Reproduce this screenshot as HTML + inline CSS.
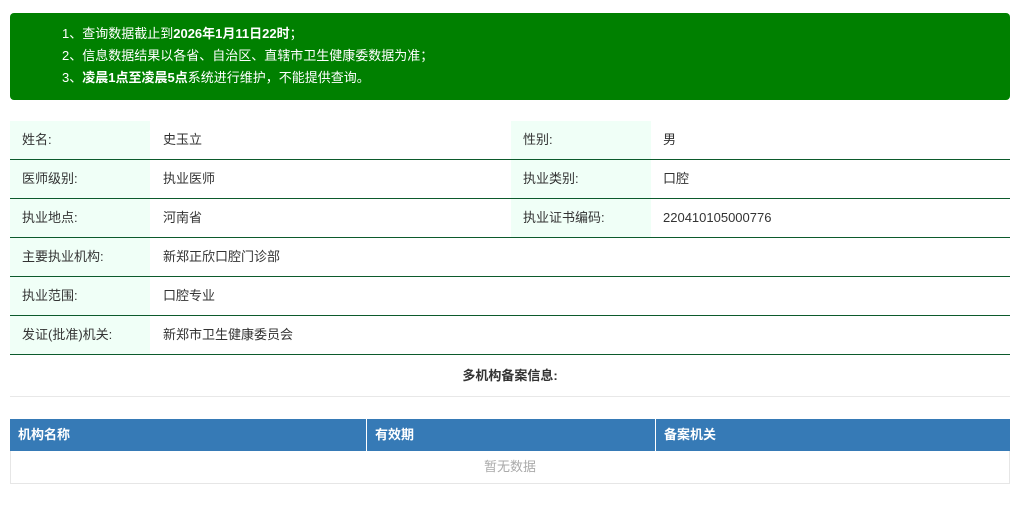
<!DOCTYPE html>
<html><head><meta charset="utf-8"><style>
body{margin:0;background:#fff;font-family:"Liberation Sans","Noto Sans CJK SC",sans-serif;font-size:13px;color:#333;width:1018px;height:521px;overflow:hidden;position:relative}
.notice{position:absolute;left:10px;top:13px;width:1000px;height:87px;background:#008000;border-radius:4px;color:#fff;font-size:13px;line-height:22px;box-sizing:border-box;padding:10px 0 0 52px}
.row{position:absolute;left:10px;width:1000px;height:38px;border-bottom:1px solid #0c5a2c}
.c{position:absolute;top:0;height:38px;line-height:38px}
.l{background:#f0fff7;width:140px;padding-left:12px;box-sizing:border-box}
.title{position:absolute;left:10px;width:1000px;top:366px;text-align:center;font-weight:bold;font-size:13px;line-height:20px}
.hr{position:absolute;left:10px;width:1000px;top:396px;border-top:1px solid #e8e8e8}
.th{position:absolute;top:419px;height:32px;background:#367ab6;color:#fff;font-weight:bold;line-height:32px;padding-left:8px;box-sizing:border-box}
.empty{position:absolute;left:10px;top:451px;width:1000px;height:33px;border:1px solid #e6e6e6;border-top:none;box-sizing:border-box;text-align:center;line-height:32px;color:#aaa}
</style></head><body>
<div class="notice">1、查询数据截止到<b>2026年1月11日22时</b>；<br>2、信息数据结果以各省、自治区、直辖市卫生健康委数据为准；<br>3、<b>凌晨1点至凌晨5点</b>系统进行维护，不能提供查询。</div>

<div class="row" style="top:121px"><div class="c l" style="left:0">姓名:</div><div class="c" style="left:153px">史玉立</div><div class="c l" style="left:501px">性别:</div><div class="c" style="left:653px">男</div></div>
<div class="row" style="top:160px"><div class="c l" style="left:0">医师级别:</div><div class="c" style="left:153px">执业医师</div><div class="c l" style="left:501px">执业类别:</div><div class="c" style="left:653px">口腔</div></div>
<div class="row" style="top:199px"><div class="c l" style="left:0">执业地点:</div><div class="c" style="left:153px">河南省</div><div class="c l" style="left:501px">执业证书编码:</div><div class="c" style="left:653px">220410105000776</div></div>
<div class="row" style="top:238px"><div class="c l" style="left:0">主要执业机构:</div><div class="c" style="left:153px">新郑正欣口腔门诊部</div></div>
<div class="row" style="top:277px"><div class="c l" style="left:0">执业范围:</div><div class="c" style="left:153px">口腔专业</div></div>
<div class="row" style="top:316px"><div class="c l" style="left:0">发证(批准)机关:</div><div class="c" style="left:153px">新郑市卫生健康委员会</div></div>

<div class="title">多机构备案信息:</div>
<div class="hr"></div>
<div class="th" style="left:10px;width:356px">机构名称</div>
<div class="th" style="left:367px;width:288px">有效期</div>
<div class="th" style="left:656px;width:354px">备案机关</div>
<div class="empty">暂无数据</div>
</body></html>
